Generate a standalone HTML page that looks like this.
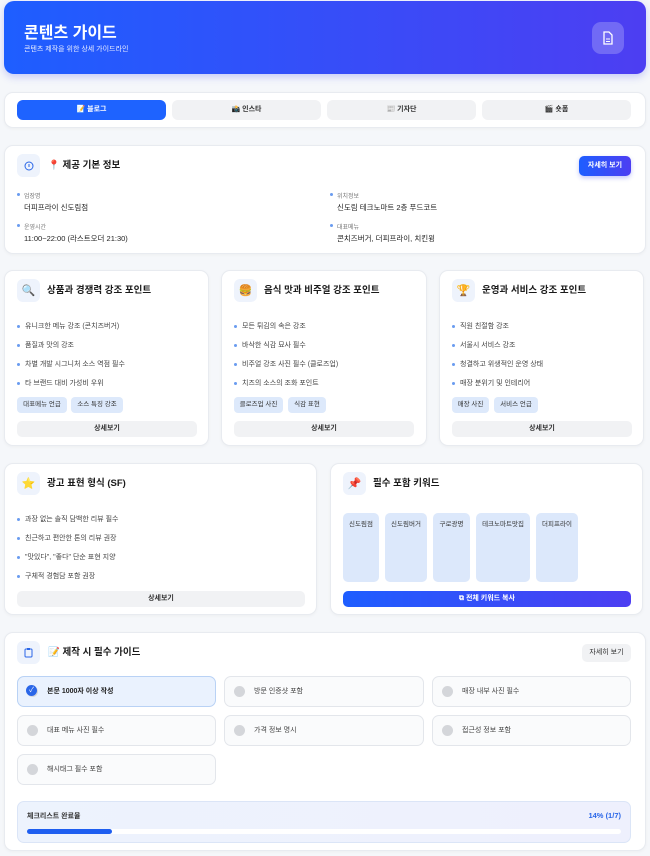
<!DOCTYPE html>
<html><head><meta charset="utf-8"><style>
*{box-sizing:border-box;margin:0;padding:0}
body{width:650px;height:856px;background:#f5f7fa;font-family:"Liberation Sans","Noto Sans CJK KR",sans-serif;position:relative;overflow:hidden;color:#222}
.a{position:absolute}
.card{position:absolute;background:#fff;border:1px solid #e8ebf0;border-radius:9px;box-shadow:0 1px 3px rgba(0,0,0,.04)}
.ib{position:absolute;width:23px;height:23px;border-radius:6px;background:#eef3fc;display:flex;align-items:center;justify-content:center;font-size:11px}
.t{position:absolute;font-size:9.5px;font-weight:700;color:#1a1a1a;white-space:nowrap;line-height:12px}
.li{position:absolute;font-size:7px;color:#444;white-space:nowrap;line-height:9px;padding-left:8px}
.li:before{content:"";position:absolute;left:0;top:3px;width:3px;height:3px;border-radius:50%;background:#6a9cf0}
.tag{position:absolute;height:16px;border-radius:4px;background:#dde9fb;font-size:6.5px;color:#333;line-height:16px;text-align:center}
.btn{position:absolute;height:16px;border-radius:5px;background:#f1f2f4;font-size:7px;font-weight:700;color:#333;line-height:16px;text-align:center}
.tab{position:absolute;top:100px;height:20px;border-radius:6px;background:#f1f2f4;font-size:7px;font-weight:700;color:#333;line-height:20px;text-align:center}
.lab{position:absolute;font-size:6px;color:#777;padding-left:7px;white-space:nowrap}
.lab:before{content:"";position:absolute;left:0;top:2px;width:3px;height:3px;border-radius:50%;background:#6a9cf0}
.val{position:absolute;font-size:7.5px;color:#222;white-space:nowrap}
.kw{position:absolute;top:513px;height:69px;border-radius:5px;background:#dce8fb;font-size:6.5px;color:#333;text-align:center;padding-top:5px}
.ck{position:absolute;height:31px;border:1px solid #e3e6eb;border-radius:7px;background:#fafbfc;font-size:7px;color:#444;line-height:29px;padding-left:29px;white-space:nowrap}
.ck:before{content:"";position:absolute;left:9px;top:9px;width:11px;height:11px;border-radius:50%;background:#d4d6da}
</style></head><body>

<div class="a" style="left:4px;top:1px;width:642px;height:73px;border-radius:10px;background:linear-gradient(90deg,#1e5eff,#4d3ef2);box-shadow:0 3px 8px rgba(60,70,240,.25)"></div>
<div class="a" style="left:24px;top:19px;font-size:16px;font-weight:700;color:#fff">콘텐츠 가이드</div>
<div class="a" style="left:24px;top:44px;font-size:7px;color:#e8ecff">콘텐츠 제작을 위한 상세 가이드라인</div>
<div class="a" style="left:592px;top:22px;width:32px;height:32px;border-radius:9px;background:rgba(255,255,255,.22);display:flex;align-items:center;justify-content:center">
<svg width="12" height="14" viewBox="0 0 12 14"><path d="M2 1h5l3 3v9H2z" fill="none" stroke="#fff" stroke-width="1.3"/><path d="M4 8h4M4 10.5h4" stroke="#fff" stroke-width="1.1"/></svg></div>

<div class="card" style="left:4px;top:92px;width:642px;height:36px"></div>
<div class="tab" style="left:17px;width:149px;background:#1e63ff;color:#fff">📝 블로그</div>
<div class="tab" style="left:172px;width:149px">📸 인스타</div>
<div class="tab" style="left:327px;width:149px">📰 기자단</div>
<div class="tab" style="left:482px;width:149px">🎬 숏폼</div>

<div class="card" style="left:4px;top:145px;width:642px;height:109px"></div>
<div class="ib" style="left:17px;top:154px"><svg width="10" height="10" viewBox="0 0 10 10"><circle cx="5" cy="5" r="4" fill="none" stroke="#2a66e8" stroke-width="1"/><path d="M5 3v3" stroke="#2a66e8" stroke-width="1"/></svg></div>
<div class="t" style="left:48px;top:160px">📍 제공 기본 정보</div>
<div class="a" style="left:579px;top:156px;width:52px;height:20px;border-radius:5px;background:linear-gradient(90deg,#1e5eff,#4d3ef2);color:#fff;font-size:7px;font-weight:700;text-align:center;line-height:20px;box-shadow:0 2px 5px rgba(60,70,240,.3)">자세히 보기</div>
<div class="lab" style="left:17px;top:191px">업장명</div>
<div class="val" style="left:24px;top:202px">더피프라이 신도림점</div>
<div class="lab" style="left:17px;top:222px">운영시간</div>
<div class="val" style="left:24px;top:233px">11:00~22:00 (라스트오더 21:30)</div>
<div class="lab" style="left:330px;top:191px">위치정보</div>
<div class="val" style="left:337px;top:202px">신도림 테크노마트 2층 푸드코트</div>
<div class="lab" style="left:330px;top:222px">대표메뉴</div>
<div class="val" style="left:337px;top:233px">콘치즈버거, 더피프라이, 치킨윙</div>

<div class="card" style="left:4px;top:270px;width:205px;height:176px"></div>
<div class="ib" style="left:17px;top:279px">🔍</div>
<div class="t" style="left:47px;top:285px">상품과 경쟁력 강조 포인트</div>
<div class="li" style="left:17px;top:322px">유니크한 메뉴 강조 (콘치즈버거)</div>
<div class="li" style="left:17px;top:341px">품질과 맛의 강조</div>
<div class="li" style="left:17px;top:360px">차별 개발 시그니처 소스 역점 필수</div>
<div class="li" style="left:17px;top:379px">타 브랜드 대비 가성비 우위</div>
<div class="tag" style="left:17px;top:397px;width:50px">대표메뉴 언급</div>
<div class="tag" style="left:71px;top:397px;width:52px">소스 특징 강조</div>
<div class="btn" style="left:17px;top:421px;width:180px">상세보기</div>

<div class="card" style="left:221px;top:270px;width:206px;height:176px"></div>
<div class="ib" style="left:234px;top:279px">🍔</div>
<div class="t" style="left:264px;top:285px">음식 맛과 비주얼 강조 포인트</div>
<div class="li" style="left:234px;top:322px">모든 튀김의 속은 강조</div>
<div class="li" style="left:234px;top:341px">바삭한 식감 묘사 필수</div>
<div class="li" style="left:234px;top:360px">비주얼 강조 사진 필수 (클로즈업)</div>
<div class="li" style="left:234px;top:379px">치즈의 소스의 조화 포인트</div>
<div class="tag" style="left:234px;top:397px;width:49px">클로즈업 사진</div>
<div class="tag" style="left:288px;top:397px;width:38px">식감 표현</div>
<div class="btn" style="left:234px;top:421px;width:180px">상세보기</div>

<div class="card" style="left:439px;top:270px;width:205px;height:176px"></div>
<div class="ib" style="left:452px;top:279px">🏆</div>
<div class="t" style="left:482px;top:285px">운영과 서비스 강조 포인트</div>
<div class="li" style="left:452px;top:322px">직원 친절함 강조</div>
<div class="li" style="left:452px;top:341px">서울시 서비스 강조</div>
<div class="li" style="left:452px;top:360px">청결하고 위생적인 운영 상태</div>
<div class="li" style="left:452px;top:379px">매장 분위기 및 인테리어</div>
<div class="tag" style="left:452px;top:397px;width:37px">매장 사진</div>
<div class="tag" style="left:494px;top:397px;width:44px">서비스 언급</div>
<div class="btn" style="left:452px;top:421px;width:180px">상세보기</div>

<div class="card" style="left:4px;top:463px;width:313px;height:152px"></div>
<div class="ib" style="left:17px;top:472px">⭐</div>
<div class="t" style="left:47px;top:478px">광고 표현 형식 (SF)</div>
<div class="li" style="left:17px;top:515px">과장 없는 솔직 담백한 리뷰 필수</div>
<div class="li" style="left:17px;top:534px">친근하고 편안한 톤의 리뷰 권장</div>
<div class="li" style="left:17px;top:553px">"맛있다", "좋다" 단순 표현 지양</div>
<div class="li" style="left:17px;top:572px">구체적 경험담 포함 권장</div>
<div class="btn" style="left:17px;top:591px;width:288px">상세보기</div>

<div class="card" style="left:330px;top:463px;width:313px;height:152px"></div>
<div class="ib" style="left:343px;top:472px">📌</div>
<div class="t" style="left:373px;top:478px">필수 포함 키워드</div>
<div class="kw" style="left:343px;width:36px">신도림점</div>
<div class="kw" style="left:385px;width:42px">신도림버거</div>
<div class="kw" style="left:433px;width:37px">구로광명</div>
<div class="kw" style="left:476px;width:54px">테크노마트맛집</div>
<div class="kw" style="left:536px;width:42px">더피프라이</div>
<div class="a" style="left:343px;top:591px;width:288px;height:16px;border-radius:5px;background:linear-gradient(90deg,#1e5eff,#4d3ef2);color:#fff;font-size:7px;font-weight:700;text-align:center;line-height:16px">⧉ 전체 키워드 복사</div>

<div class="card" style="left:4px;top:632px;width:642px;height:219px"></div>
<div class="ib" style="left:17px;top:641px"><svg width="9" height="11" viewBox="0 0 9 11"><rect x="1" y="2" width="7" height="8" rx="1" fill="none" stroke="#2a66e8" stroke-width="1"/><rect x="3" y="1" width="3" height="2" fill="#2a66e8"/></svg></div>
<div class="t" style="left:48px;top:647px">📝 제작 시 필수 가이드</div>
<div class="btn" style="left:582px;top:644px;width:49px;height:18px;line-height:18px;font-weight:400">자세히 보기</div>
<div class="ck" style="left:17px;top:676px;width:199px;background:#eaf2fe;border-color:#b9d2f5;font-weight:700;color:#222">본문 1000자 이상 작성</div>
<div class="a" style="left:26px;top:685px;width:11px;height:11px;border-radius:50%;background:#2a66e8;color:#fff;font-size:7px;line-height:11px;text-align:center">✓</div>
<div class="ck" style="left:224px;top:676px;width:200px">방문 인증샷 포함</div>
<div class="ck" style="left:432px;top:676px;width:199px">매장 내부 사진 필수</div>
<div class="ck" style="left:17px;top:715px;width:199px">대표 메뉴 사진 필수</div>
<div class="ck" style="left:224px;top:715px;width:200px">가격 정보 명시</div>
<div class="ck" style="left:432px;top:715px;width:199px">접근성 정보 포함</div>
<div class="ck" style="left:17px;top:754px;width:199px">해시태그 필수 포함</div>

<div class="a" style="left:17px;top:801px;width:614px;height:42px;border-radius:7px;background:linear-gradient(90deg,#edf3fd,#eef0fd);border:1px solid #dbe5f7"></div>
<div class="a" style="left:27px;top:811px;font-size:7px;font-weight:700;color:#333">체크리스트 완료율</div>
<div class="a" style="right:29px;top:811px;font-size:7.5px;font-weight:700;color:#2a66e8">14% (1/7)</div>
<div class="a" style="left:27px;top:829px;width:594px;height:5px;border-radius:3px;background:#fff"></div>
<div class="a" style="left:27px;top:829px;width:85px;height:5px;border-radius:3px;background:#1e5ef0"></div>
</body></html>
